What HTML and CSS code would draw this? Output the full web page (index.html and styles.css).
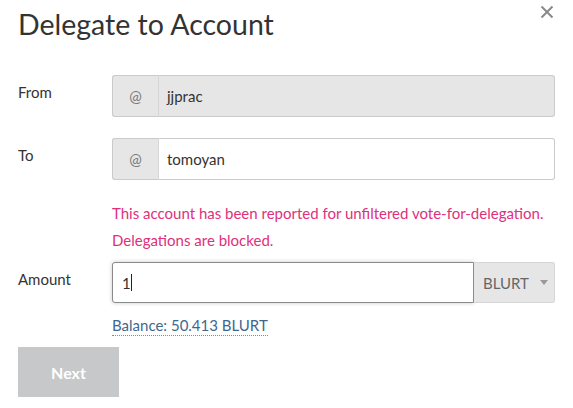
FILE: index.html
```html
<!DOCTYPE html>
<html>
<head>
<meta charset="utf-8">
<link rel="stylesheet" href="styles.css">
</head>
<body>
<div class="modal">
  <button class="close" aria-label="Close"><svg width="14" height="14" viewBox="0 0 14 14"><path d="M1.5 1.5 L12.5 12.5 M12.5 1.5 L1.5 12.5" stroke="#8a8a8a" stroke-width="2" fill="none"/></svg></button>
  <h1 class="title">Delegate to Account</h1>
  <div class="form">
    <div class="row">
      <label class="label">From</label>
      <div class="group">
        <span class="prefix">@</span>
        <span class="field disabled">jjprac</span>
      </div>
    </div>
    <div class="row">
      <label class="label">To</label>
      <div class="group">
        <span class="prefix">@</span>
        <span class="field">tomoyan</span>
      </div>
    </div>
    <div class="row row-error">
      <span></span>
      <div class="error">This account has been reported for unfiltered vote-for-delegation.<br>Delegations are blocked.</div>
    </div>
    <div class="row row-amount">
      <label class="label">Amount</label>
      <div class="group">
        <span class="field amount focus">1<span class="caret"></span></span>
        <span class="select">BLURT <span class="arrow"></span></span>
      </div>
    </div>
    <div class="row row-balance">
      <span></span>
      <div class="balance"><span class="balance-link">Balance: 50.413 BLURT</span></div>
    </div>
  </div>
  <button class="next">Next</button>
</div>
</body>
</html>
```
FILE: styles.css
```css
* { box-sizing: border-box; }
body {
  margin: 0;
  background: #fff;
  font-family: "Lato", "Liberation Sans", sans-serif;
  color: #333;
}
.modal {
  position: relative;
  width: 573px;
  height: 408px;
  padding: 0 18px;
}
.close {
  position: absolute;
  top: 5px;
  right: 19px;
  width: 14px;
  height: 14px;
  border: 0;
  background: none;
  padding: 0;
  cursor: pointer;
  display: block;
}
.close svg { display: block; }
.title {
  margin: 0;
  padding-top: 5px;
  font-size: 28.5px;
  line-height: 38px;
  font-weight: 400;
  color: #333;
}
.form {
  margin-top: 32px;
  width: 537px;
}
.row {
  display: grid;
  grid-template-columns: 94px 443px;
  align-items: center;
}
.row + .row { margin-top: 21px; }
.label {
  font-size: 15px;
  color: #333;
  align-self: start;
  padding-top: 8px;
}
.group {
  display: flex;
  height: 42px;
}
.prefix {
  width: 47px;
  background: #e6e6e6;
  border: 1px solid #cacaca;
  border-right: 1px solid #d6d6d6;
  border-radius: 3px 0 0 3px;
  display: flex;
  align-items: center;
  justify-content: center;
  font-size: 15px;
  color: #7a7a7a;
}
.field {
  flex: 1;
  border: 1px solid #cacaca;
  border-left: 0;
  border-radius: 0 3px 3px 0;
  display: flex;
  align-items: center;
  padding-left: 8px;
  font-size: 15px;
  color: #333;
  background: #fff;
}
.field.disabled { background: #e6e6e6; }
.row.row-error { margin-top: 20px; }
.row.row-amount { margin-top: 8px; }
.row-amount .group { height: 41px; }
.amount {
  border: 1px solid #8a8a8a;
  border-radius: 3px 0 0 3px;
  padding-left: 9px;
  box-shadow: 0 0 4px #cacaca;
}
.caret {
  display: inline-block;
  width: 1px;
  height: 17px;
  background: #222;
}
.select {
  width: 81px;
  background: #e6e6e6;
  border: 1px solid #d6d6d6;
  border-left: 0;
  border-radius: 0 3px 3px 0;
  display: flex;
  align-items: center;
  padding-left: 9px;
  font-size: 15px;
  color: #666;
}
.arrow {
  width: 0;
  height: 0;
  border-left: 4px solid transparent;
  border-right: 4px solid transparent;
  border-top: 5px solid #999;
  margin-left: 11px;
}
.error {
  font-size: 15px;
  line-height: 27px;
  color: #e0307c;
}
.row.row-balance { margin-top: 13px; }
.balance {
  font-size: 15px;
  color: #3e6790;
}
.balance-link {
  border-bottom: 1px dotted #7a8ea3;
  padding-bottom: 1px;
}
.next {
  display: block;
  margin-top: 13px;
  width: 101px;
  height: 50px;
  border: 0;
  border-radius: 0;
  background: #c6c8ca;
  color: #fff;
  font-family: "Lato", "Liberation Sans", sans-serif;
  font-weight: 700;
  font-size: 16px;
}
```
